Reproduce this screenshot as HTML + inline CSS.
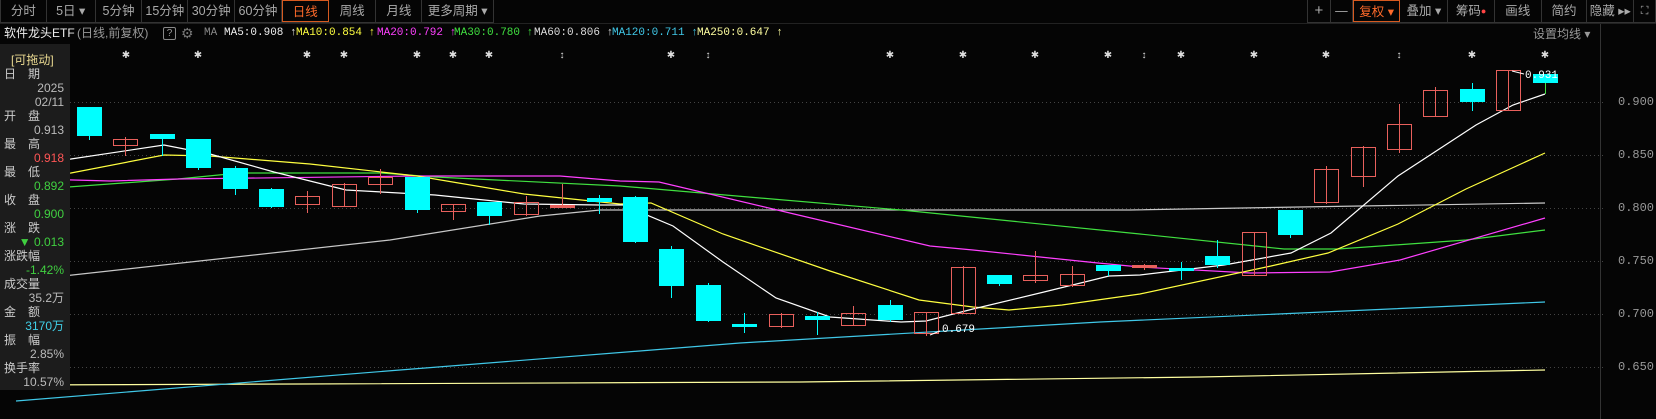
<!DOCTYPE html>
<html><head><meta charset="utf-8">
<style>
*{margin:0;padding:0;box-sizing:border-box}
body{width:1656px;height:419px;background:#050505;overflow:hidden;position:relative;font-family:"Liberation Sans","Noto Sans CJK SC",sans-serif;color:#aaa}
.tb{position:absolute;top:0;height:23px;border:1px solid #333;border-top:none;display:flex;background:#050505}
.tb div{border-right:1px solid #333;height:22px;line-height:22px;text-align:center;font-size:12.5px;color:#aaa;white-space:nowrap}
.tb div:last-child{border-right:none}
.tb .on{color:#ff6a2a;border:1px solid #d65a20;}
.ma{position:absolute;top:25px;font-family:"Liberation Mono","Noto Sans CJK SC",monospace;font-size:11px;line-height:16px;white-space:nowrap}
.panel{position:absolute;left:0;top:44px;width:70px;height:346px;background:#1c1c1c;font-size:12px;line-height:14px}
.panel div{height:14px;white-space:nowrap}
.l{padding-left:4px;color:#ccc}
.v{text-align:right;padding-right:6px;color:#bbb}
.ax{position:absolute;left:1618px;font-family:"Liberation Mono",monospace;font-size:12px;color:#999}
</style></head><body>
<div class="tb" style="left:0;width:494px">
<div style="width:46px">分时</div><div style="width:49px">5日 ▾</div><div style="width:47px">5分钟</div><div style="width:46px">15分钟</div><div style="width:47px">30分钟</div><div style="width:47px">60分钟</div><div class="on" style="width:47px">日线</div><div style="width:48px">周线</div><div style="width:46px">月线</div><div style="width:71px">更多周期 ▾</div>
</div>
<div class="tb" style="left:1307px;width:349px">
<div style="width:23px;font-size:15px">+</div><div style="width:22px">—</div><div class="on" style="width:48px">复权 ▾</div><div style="width:48px">叠加 ▾</div><div style="width:47px">筹码<span style="color:#f44;font-size:9px;vertical-align:top">●</span></div><div style="width:47px">画线</div><div style="width:46px">简约</div><div style="width:47px">隐藏 ▸▸</div><div style="width:21px;font-size:11px">⛶</div>
</div>
<div style="position:absolute;left:0;top:23px;width:1656px;height:1px;background:#222"></div>
<div class="ma" style="left:4px;color:#eee;font-family:'Liberation Sans','Noto Sans CJK SC',sans-serif;font-size:12px">软件龙头ETF</div>
<div class="ma" style="left:77px;color:#999;font-family:'Liberation Sans','Noto Sans CJK SC',sans-serif;font-size:12px">(日线,前复权)</div>
<div style="position:absolute;left:163px;top:27px;width:13px;height:13px;border:1px solid #888;border-radius:2px;font-size:10px;line-height:11px;text-align:center;color:#999">?</div>
<div style="position:absolute;left:181px;top:25px;font-size:14px;color:#777">⚙</div>
<div class="ma" style="left:204px;color:#888">MA</div>
<div class="ma" style="left:224px;color:#eee">MA5:0.908 ↑</div>
<div class="ma" style="left:296px;color:#ffff40">MA10:0.854 ↑</div>
<div class="ma" style="left:377px;color:#ff40ff">MA20:0.792 ↑</div>
<div class="ma" style="left:454px;color:#40e040">MA30:0.780 ↑</div>
<div class="ma" style="left:534px;color:#ddd">MA60:0.806 ↑</div>
<div class="ma" style="left:612px;color:#40c8e8">MA120:0.711 ↑</div>
<div class="ma" style="left:697px;color:#ffffa0">MA250:0.647 ↑</div>
<div class="ma" style="left:1533px;top:26px;color:#999;font-family:'Liberation Sans','Noto Sans CJK SC',sans-serif;font-size:12px">设置均线 ▾</div>

<svg width="1656" height="419" style="position:absolute;left:0;top:0">
<line x1="1600.5" y1="24" x2="1600.5" y2="419" stroke="#333"/>
<g stroke="#444" stroke-dasharray="1,3">
<line x1="70" y1="102.5" x2="1604" y2="102.5"/><line x1="70" y1="155.5" x2="1604" y2="155.5"/><line x1="70" y1="208.5" x2="1604" y2="208.5"/><line x1="70" y1="261.5" x2="1604" y2="261.5"/><line x1="70" y1="314.5" x2="1604" y2="314.5"/><line x1="70" y1="367.5" x2="1604" y2="367.5"/>
</g>
<g fill="#ddd" font-family="Liberation Mono" font-size="10" text-anchor="middle">
<text x="126" y="58">✱</text><text x="198" y="58">✱</text><text x="307" y="58">✱</text><text x="344" y="58">✱</text><text x="417" y="58">✱</text><text x="453" y="58">✱</text><text x="489" y="58">✱</text><text x="562" y="58">↕</text><text x="671" y="58">✱</text><text x="708" y="58">↕</text><text x="890" y="58">✱</text><text x="963" y="58">✱</text><text x="1035" y="58">✱</text><text x="1108" y="58">✱</text><text x="1144" y="58">↕</text><text x="1181" y="58">✱</text><text x="1254" y="58">✱</text><text x="1326" y="58">✱</text><text x="1399" y="58">↕</text><text x="1472" y="58">✱</text><text x="1545" y="58">✱</text>
</g>
<g fill="none" stroke-width="1.2">
<polyline stroke="#ffffa0" points="16,385 300,384 800,382 1200,377 1545,370"/>
<polyline stroke="#40c8e8" points="16,401 400,370 740,343 1100,322 1545,302"/>
<polyline stroke="#c8c8c8" points="0,283 390,240 540,216 600,210 900,210 1130,210 1300,207 1545,203"/>
<polyline stroke="#40e040" points="0,192 178,179 239,173 381,173 435,177 620,186 901,210 1140,234 1284,249 1338,249 1466,240 1545,230"/>
<polyline stroke="#ff40ff" points="0,178 110,181 178,179 417,176 560,176 620,181 659,182 794,214 930,246 973,250 1098,263 1140,267 1250,273 1330,272 1400,260 1545,218"/>
<polyline stroke="#ffff40" points="0,176 71,173 164,155 210,156 310,164 417,176 524,194 620,204 651,203 723,234 830,271 919,300 973,307 1009,310 1062,305 1140,294 1271,266 1328,253 1398,224 1466,189 1545,153"/>
<polyline stroke="#fff" points="0,162 71,159 164,145 210,154 274,172 346,190 435,195 524,204 600,205 623,205 673,226 723,262 776,298 830,317 901,322 926,321 973,309 1044,292 1109,276 1140,275 1224,265 1291,253 1331,233 1398,176 1476,125 1513,105 1545,94"/>
</g>
<g fill="#00ffff" stroke="#00ffff">
<line x1="89.5" y1="107" x2="89.5" y2="140"/><rect x="77" y="107" width="25" height="29" stroke="none"/>
<line x1="162.5" y1="136" x2="162.5" y2="156"/><rect x="150" y="134" width="25" height="5" stroke="none"/>
<line x1="198.5" y1="139" x2="198.5" y2="170"/><rect x="186" y="139" width="25" height="29" stroke="none"/>
<line x1="235.5" y1="166" x2="235.5" y2="195"/><rect x="223" y="168" width="25" height="21" stroke="none"/>
<line x1="271.5" y1="188" x2="271.5" y2="208"/><rect x="259" y="189" width="25" height="18" stroke="none"/>
<line x1="417.5" y1="177" x2="417.5" y2="213"/><rect x="405" y="177" width="25" height="33" stroke="none"/>
<line x1="489.5" y1="202" x2="489.5" y2="225"/><rect x="477" y="202" width="25" height="14" stroke="none"/>
<line x1="599.5" y1="195" x2="599.5" y2="214"/><rect x="587" y="198" width="25" height="4" stroke="none"/>
<line x1="635.5" y1="196" x2="635.5" y2="243"/><rect x="623" y="197" width="25" height="45" stroke="none"/>
<line x1="671.5" y1="246" x2="671.5" y2="298"/><rect x="659" y="249" width="25" height="37" stroke="none"/>
<line x1="708.5" y1="283" x2="708.5" y2="322"/><rect x="696" y="285" width="25" height="36" stroke="none"/>
<line x1="744.5" y1="313" x2="744.5" y2="333"/><rect x="732" y="324" width="25" height="3" stroke="none"/>
<line x1="817.5" y1="312" x2="817.5" y2="335"/><rect x="805" y="316" width="25" height="4" stroke="none"/>
<line x1="890.5" y1="300" x2="890.5" y2="322"/><rect x="878" y="305" width="25" height="15" stroke="none"/>
<line x1="999.5" y1="275" x2="999.5" y2="286"/><rect x="987" y="275" width="25" height="9" stroke="none"/>
<line x1="1108.5" y1="265" x2="1108.5" y2="276"/><rect x="1096" y="265" width="25" height="6" stroke="none"/>
<line x1="1181.5" y1="262" x2="1181.5" y2="280"/><rect x="1169" y="268" width="25" height="3" stroke="none"/>
<line x1="1217.5" y1="240" x2="1217.5" y2="268"/><rect x="1205" y="256" width="25" height="9" stroke="none"/>
<line x1="1290.5" y1="210" x2="1290.5" y2="238"/><rect x="1278" y="210" width="25" height="25" stroke="none"/>
<line x1="1472.5" y1="83" x2="1472.5" y2="111"/><rect x="1460" y="89" width="25" height="13" stroke="none"/>
<line x1="1545.5" y1="74" x2="1545.5" y2="94" stroke="#40e040"/><rect x="1533" y="74" width="25" height="9" stroke="none"/>
</g>
<g fill="none" stroke="#e8605c">
<line x1="125.5" y1="137" x2="125.5" y2="156"/><rect x="113.5" y="139.5" width="24" height="6"/>
<line x1="307.5" y1="191" x2="307.5" y2="213"/><rect x="295.5" y="196.5" width="24" height="8"/>
<line x1="344.5" y1="183" x2="344.5" y2="207"/><rect x="332.5" y="184.5" width="24" height="22"/>
<line x1="380.5" y1="169" x2="380.5" y2="194"/><rect x="368.5" y="177.5" width="24" height="7"/>
<line x1="453.5" y1="204" x2="453.5" y2="220"/><rect x="441.5" y="204.5" width="24" height="7"/>
<line x1="526.5" y1="196" x2="526.5" y2="216"/><rect x="514.5" y="202.5" width="24" height="12"/>
<line x1="562.5" y1="184" x2="562.5" y2="207"/><rect x="550.5" y="205.5" width="24" height="2" fill="#e8605c"/>
<line x1="781.5" y1="313" x2="781.5" y2="328"/><rect x="769.5" y="314.5" width="24" height="12"/>
<line x1="853.5" y1="306" x2="853.5" y2="326"/><rect x="841.5" y="313.5" width="24" height="12"/>
<line x1="926.5" y1="312" x2="926.5" y2="336"/><rect x="914.5" y="312.5" width="24" height="21"/>
<line x1="963.5" y1="266" x2="963.5" y2="314"/><rect x="951.5" y="267.5" width="24" height="46"/>
<line x1="1035.5" y1="251" x2="1035.5" y2="283"/><rect x="1023.5" y="275.5" width="24" height="5"/>
<line x1="1072.5" y1="266" x2="1072.5" y2="287"/><rect x="1060.5" y="274.5" width="24" height="11"/>
<line x1="1144.5" y1="264" x2="1144.5" y2="270"/><rect x="1132.5" y="265.5" width="24" height="2" fill="#e8605c"/>
<line x1="1254.5" y1="232" x2="1254.5" y2="276"/><rect x="1242.5" y="232.5" width="24" height="43"/>
<line x1="1326.5" y1="166" x2="1326.5" y2="204"/><rect x="1314.5" y="169.5" width="24" height="33"/>
<line x1="1363.5" y1="146" x2="1363.5" y2="187"/><rect x="1351.5" y="147.5" width="24" height="29"/>
<line x1="1399.5" y1="104" x2="1399.5" y2="153"/><rect x="1387.5" y="124.5" width="24" height="25"/>
<line x1="1435.5" y1="87" x2="1435.5" y2="116"/><rect x="1423.5" y="90.5" width="24" height="26"/>
<line x1="1508.5" y1="70" x2="1508.5" y2="111"/><rect x="1496.5" y="70.5" width="24" height="40"/>
</g>
<g fill="#fff" font-family="Liberation Mono" font-size="11">
<path d="M930 335 L940 331" stroke="#fff"/><text x="942" y="332">0.679</text>
<path d="M1512 71 L1524 74" stroke="#fff"/><text x="1525" y="78">0.931</text>
</g>
</svg>
<div class="ax" style="top:95px">0.900</div>
<div class="ax" style="top:148px">0.850</div>
<div class="ax" style="top:201px">0.800</div>
<div class="ax" style="top:254px">0.750</div>
<div class="ax" style="top:307px">0.700</div>
<div class="ax" style="top:360px">0.650</div>

<div class="panel">
<div style="padding-left:11px;color:#e8d890;margin-top:9px">[可拖动]</div>
<div class="l">日　期</div><div class="v">2025</div><div class="v">02/11</div>
<div class="l">开　盘</div><div class="v">0.913</div>
<div class="l">最　高</div><div class="v" style="color:#ff5555">0.918</div>
<div class="l">最　低</div><div class="v" style="color:#40d040">0.892</div>
<div class="l">收　盘</div><div class="v" style="color:#40d040">0.900</div>
<div class="l">涨　跌</div><div class="v" style="color:#40d040">▼ 0.013</div>
<div class="l">涨跌幅</div><div class="v" style="color:#40d040">-1.42%</div>
<div class="l">成交量</div><div class="v">35.2万</div>
<div class="l">金　额</div><div class="v" style="color:#40d0e8">3170万</div>
<div class="l">振　幅</div><div class="v">2.85%</div>
<div class="l">换手率</div><div class="v">10.57%</div>
</div>
</body></html>
